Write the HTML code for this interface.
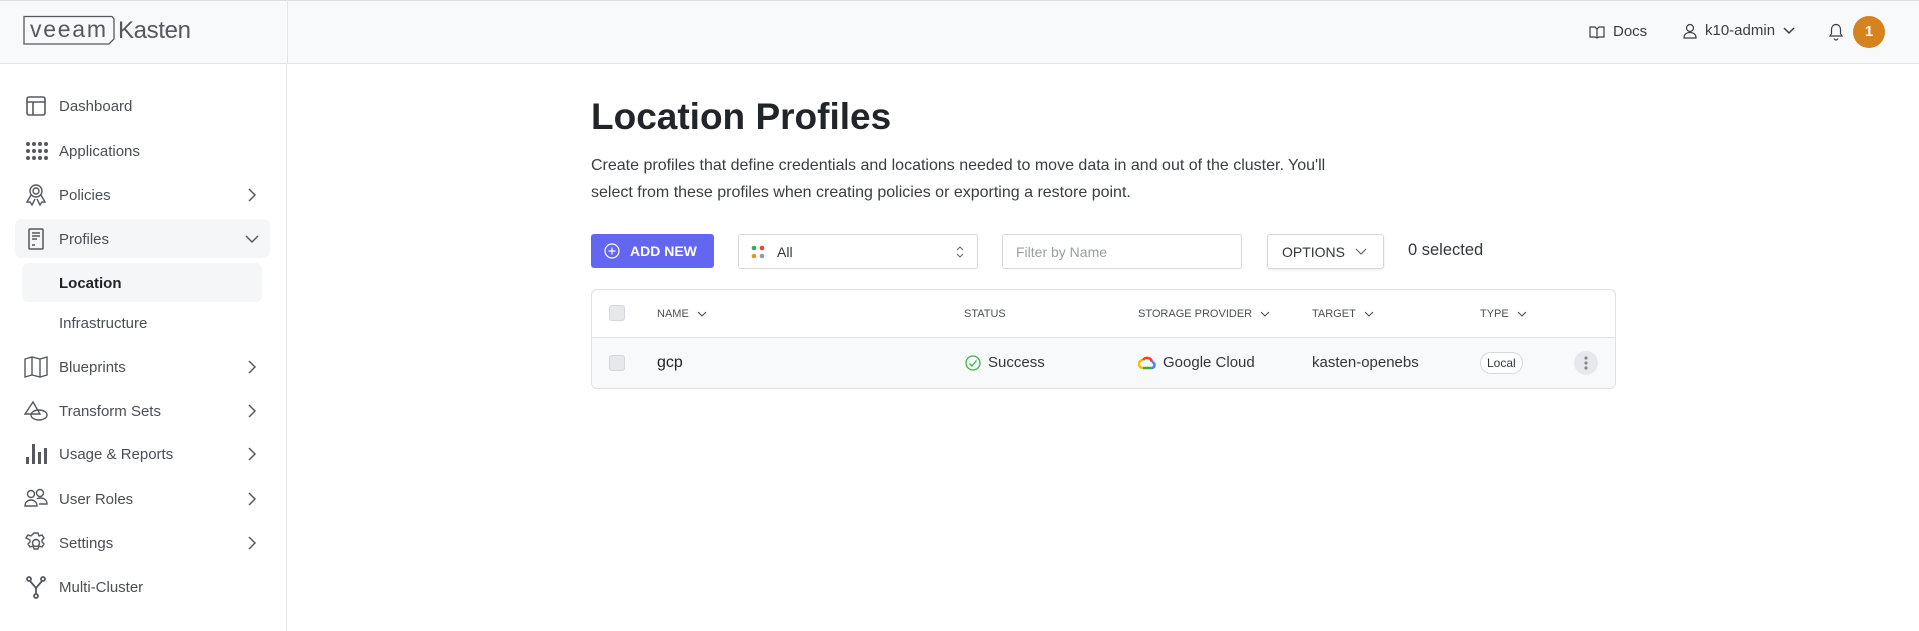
<!DOCTYPE html>
<html><head><meta charset="utf-8"><style>
*{box-sizing:border-box;margin:0;padding:0}
body{width:1919px;height:631px;overflow:hidden;background:#fff;font-family:"Liberation Sans",sans-serif;color:#33363b;position:relative}
.hdr{position:absolute;left:0;top:0;width:1919px;height:64px;background:#f8f9fa;border-top:1px solid #dcdee2;border-bottom:1px solid #e3e5e8}
.side{position:absolute;left:0;top:64px;width:287px;height:567px;border-right:1px solid #e3e5e8}
.logoL{position:absolute;left:287px;top:0;width:1px;height:64px;background:#e3e5e8}
.nav{position:absolute;left:0;width:287px;height:40px;display:flex;align-items:center;font-size:15px;color:#4a4e55}
.nav svg.ic{position:absolute;left:24px;width:24px;height:24px}
.nav span{position:absolute;left:59px}
.nav .chev{position:absolute;left:244px;width:16px;height:16px}
.abs{position:absolute}
.th{position:absolute;top:18px;font-size:11px;color:#4a4e55;display:flex;align-items:center}
.th svg{margin-left:8px}
</style></head><body>
<div class="hdr"></div>
<div class="logoL"></div>
<svg class="abs" style="left:22px;top:15px" width="172" height="30" viewBox="0 0 172 30">
<path d="M2 1.5H90L92 4V24L87 29H2Z" fill="none" stroke="#55595f" stroke-width="1.3"/>
<text x="8" y="22" font-family="Liberation Sans" font-size="23" fill="#55595f" textLength="76">veeam</text>
<text x="96" y="23" font-family="Liberation Sans" font-size="24" fill="#55595f" textLength="73">Kasten</text>
</svg>
<div class="abs" style="left:1589px;top:23px;font-size:15px;color:#3a3d42;display:flex;align-items:center">
<svg width="16" height="14" viewBox="0 0 16 14" style="margin-right:8px"><path d="M1 2h5l2 2 2-2h5v10h-5l-2 1-2-1H1z M8 4v9" fill="none" stroke="#3a3d42" stroke-width="1.2"/></svg>Docs</div>
<div class="abs" style="left:1682px;top:22px;font-size:15px;color:#3a3d42;display:flex;align-items:center">
<svg width="16" height="16" viewBox="0 0 16 16" style="margin-right:7px"><circle cx="8" cy="5" r="3.5" fill="none" stroke="#3a3d42" stroke-width="1.2"/><path d="M2 15c0-4 3-5.5 6-5.5s6 1.5 6 5.5z" fill="none" stroke="#3a3d42" stroke-width="1.2"/></svg>k10-admin
<svg width="12" height="8" viewBox="0 0 12 8" style="margin-left:8px"><path d="M1 1l5 5 5-5" fill="none" stroke="#3a3d42" stroke-width="1.5"/></svg></div>
<svg class="abs" style="left:1828px;top:23px" width="16" height="18" viewBox="0 0 16 18"><path d="M8 1.5c-3 0-4.5 2.5-4.5 5v4L2 13h12l-1.5-2.5v-4c0-2.5-1.5-5-4.5-5zM6 15.5c.5 1 1.2 1.5 2 1.5s1.5-.5 2-1.5" fill="none" stroke="#3a3d42" stroke-width="1.2"/></svg>
<div class="abs" style="left:1853px;top:16px;width:32px;height:32px;border-radius:50%;background:#d6821e;color:#fff;font-weight:bold;font-size:15px;text-align:center;line-height:32px">1</div>

<div class="side"></div>
<div class="abs" style="left:15px;top:219px;width:255px;height:39px;background:#f5f6f8;border-radius:6px"></div>
<div class="abs" style="left:22px;top:263px;width:240px;height:39px;background:#f5f6f8;border-radius:6px"></div>

<div class="nav" style="top:86px"><svg class="ic" viewBox="0 0 24 24"><rect x="3" y="3" width="18" height="18" rx="2" fill="none" stroke="#55595f" stroke-width="1.6"/><path d="M3 8h18M9 8v13" stroke="#55595f" stroke-width="1.6"/></svg><span>Dashboard</span></div>
<div class="nav" style="top:131px"><svg class="ic" viewBox="0 0 24 24" fill="#55595f"><circle cx="4" cy="5" r="2"/><circle cx="10" cy="5" r="2"/><circle cx="16" cy="5" r="2"/><circle cx="22" cy="5" r="2"/><circle cx="4" cy="12" r="2"/><circle cx="10" cy="12" r="2"/><circle cx="16" cy="12" r="2"/><circle cx="22" cy="12" r="2"/><circle cx="4" cy="19" r="2"/><circle cx="10" cy="19" r="2"/><circle cx="16" cy="19" r="2"/><circle cx="22" cy="19" r="2"/></svg><span>Applications</span></div>
<div class="nav" style="top:175px"><svg class="ic" viewBox="0 0 24 24" fill="none" stroke="#55595f" stroke-width="1.4"><circle cx="12" cy="8" r="6"/><circle cx="12" cy="8" r="3"/><path d="M7 12l-4 7 3 0 2 3 3-6M17 12l4 7-3 0-2 3-3-6"/></svg><span>Policies</span><svg class="chev" viewBox="0 0 16 16"><path d="M5 2l6 6-6 6" fill="none" stroke="#55595f" stroke-width="1.5"/></svg></div>
<div class="nav" style="top:219px"><svg class="ic" viewBox="0 0 24 24" fill="none" stroke="#55595f" stroke-width="1.5"><rect x="5" y="2" width="14" height="20" rx="1"/><path d="M8 6h8M8 9h8M8 12h5M8 18h3"/></svg><span>Profiles</span><svg class="chev" viewBox="0 0 16 16"><path d="M2 5l6 6 6-6" fill="none" stroke="#55595f" stroke-width="1.5"/></svg></div>
<div class="nav" style="top:263px;font-weight:bold;color:#1f2226"><span>Location</span></div>
<div class="nav" style="top:303px"><span>Infrastructure</span></div>
<div class="nav" style="top:347px"><svg class="ic" viewBox="0 0 24 24" fill="none" stroke="#55595f" stroke-width="1.4"><path d="M1 4l7-2 8 2 7-2v18l-7 2-8-2-7 2zM8 2v18M16 4v18"/></svg><span>Blueprints</span><svg class="chev" viewBox="0 0 16 16"><path d="M5 2l6 6-6 6" fill="none" stroke="#55595f" stroke-width="1.5"/></svg></div>
<div class="nav" style="top:391px"><svg class="ic" viewBox="0 0 24 24" fill="none" stroke="#55595f" stroke-width="1.4"><path d="M9 3L1 15h15z"/><ellipse cx="15" cy="16" rx="8" ry="5"/></svg><span>Transform Sets</span><svg class="chev" viewBox="0 0 16 16"><path d="M5 2l6 6-6 6" fill="none" stroke="#55595f" stroke-width="1.5"/></svg></div>
<div class="nav" style="top:434px"><svg class="ic" viewBox="0 0 24 24" fill="#55595f"><rect x="2" y="15" width="3" height="7"/><rect x="8" y="2" width="3" height="20"/><rect x="14" y="10" width="3" height="12"/><rect x="20" y="6" width="3" height="16"/></svg><span>Usage &amp; Reports</span><svg class="chev" viewBox="0 0 16 16"><path d="M5 2l6 6-6 6" fill="none" stroke="#55595f" stroke-width="1.5"/></svg></div>
<div class="nav" style="top:479px"><svg class="ic" viewBox="0 0 24 24" fill="none" stroke="#55595f" stroke-width="1.4"><circle cx="7" cy="7" r="3.5"/><circle cx="16" cy="6" r="3.5"/><path d="M1 19c0-4 3-6 6-6s6 2 6 6zM13 12c1-1 2-1 3-1 4 0 7 2 7 6h-8"/></svg><span>User Roles</span><svg class="chev" viewBox="0 0 16 16"><path d="M5 2l6 6-6 6" fill="none" stroke="#55595f" stroke-width="1.5"/></svg></div>
<div class="nav" style="top:523px"><svg class="ic" viewBox="0 0 24 24" fill="none" stroke="#55595f" stroke-width="1.4"><circle cx="12" cy="12" r="3.5"/><path d="M10 2h4l1 3 3-1 2 3-2 2 0 2 2 2-2 3-3-1-1 3h-4l-1-3-3 1-2-3 2-2v-2L2 7l2-3 3 1z"/></svg><span>Settings</span><svg class="chev" viewBox="0 0 16 16"><path d="M5 2l6 6-6 6" fill="none" stroke="#55595f" stroke-width="1.5"/></svg></div>
<div class="nav" style="top:567px"><svg class="ic" viewBox="0 0 24 24" fill="none" stroke="#55595f" stroke-width="1.8"><circle cx="5" cy="4" r="2"/><circle cx="19" cy="4" r="2"/><circle cx="12" cy="21" r="2"/><path d="M6 6l6 7 6-7M12 13v6"/></svg><span>Multi-Cluster</span></div>

<div class="abs" style="left:591px;top:96px;font-size:37px;font-weight:bold;color:#212428">Location Profiles</div>
<div class="abs" style="left:591px;top:152px;width:800px;font-size:16px;line-height:27px;color:#3a3d42">Create profiles that define credentials and locations needed to move data in and out of the cluster. You'll<br>select from these profiles when creating policies or exporting a restore point.</div>

<div class="abs" style="left:591px;top:234px;width:123px;height:34px;background:#6366f1;border-radius:3px;color:#fff;font-weight:bold;font-size:14px;display:flex;align-items:center;padding-left:13px">
<svg width="16" height="16" viewBox="0 0 16 16" style="margin-right:10px"><circle cx="8" cy="8" r="7" fill="none" stroke="#fff" stroke-width="1.2"/><path d="M8 4.5v7M4.5 8h7" stroke="#fff" stroke-width="1.2"/></svg>ADD NEW</div>
<div class="abs" style="left:738px;top:234px;width:240px;height:35px;border:1px solid #d6d8dc;border-radius:3px;font-size:14px;display:flex;align-items:center;padding-left:12px">
<svg width="14" height="14" viewBox="0 0 14 14" style="margin-right:12px"><circle cx="3" cy="3" r="2.3" fill="#34a853"/><circle cx="11" cy="3" r="2.3" fill="#ea4335"/><circle cx="3" cy="11" r="2.3" fill="#e8912d"/><circle cx="11" cy="11" r="2.3" fill="#999"/></svg>All
<svg width="10" height="14" viewBox="0 0 10 14" style="position:absolute;right:12px"><path d="M2 5l3-3 3 3M2 9l3 3 3-3" fill="none" stroke="#666" stroke-width="1"/></svg></div>
<div class="abs" style="left:1002px;top:234px;width:240px;height:35px;border:1px solid #d6d8dc;border-radius:3px;font-size:14px;color:#9a9da2;display:flex;align-items:center;padding-left:13px">Filter by Name</div>
<div class="abs" style="left:1267px;top:234px;width:117px;height:35px;border:1px solid #d6d8dc;border-radius:3px;font-size:14px;color:#33363b;display:flex;align-items:center;padding-left:14px;box-shadow:0 1px 2px rgba(0,0,0,.08)">OPTIONS
<svg width="12" height="8" viewBox="0 0 12 8" style="margin-left:10px"><path d="M1 1l5 5 5-5" fill="none" stroke="#666" stroke-width="1.2"/></svg></div>
<div class="abs" style="left:1408px;top:241px;font-size:16.5px;color:#33363b">0 selected</div>

<div class="abs" style="left:591px;top:289px;width:1025px;height:100px;border:1px solid #dfe1e4;border-radius:6px;overflow:hidden">
<div class="abs" style="left:0;top:47px;width:1025px;height:53px;background:#f8f9fa;border-top:1px solid #dfe1e4"></div>
<div class="abs" style="left:17px;top:15px;width:16px;height:16px;border-radius:3px;background:#e6e8eb;border:1px solid #d3d6da"></div>
<div class="abs" style="left:17px;top:65px;width:16px;height:16px;border-radius:3px;background:#e6e8eb;border:1px solid #d3d6da"></div>
<div class="th" style="left:65px">NAME<svg width="10" height="6" viewBox="0 0 10 6"><path d="M1 1l4 4 4-4" fill="none" stroke="#4a4e55" stroke-width="1.1"/></svg></div>
<div class="th" style="left:372px">STATUS</div>
<div class="th" style="left:546px">STORAGE PROVIDER<svg width="10" height="6" viewBox="0 0 10 6"><path d="M1 1l4 4 4-4" fill="none" stroke="#4a4e55" stroke-width="1.1"/></svg></div>
<div class="th" style="left:720px">TARGET<svg width="10" height="6" viewBox="0 0 10 6"><path d="M1 1l4 4 4-4" fill="none" stroke="#4a4e55" stroke-width="1.1"/></svg></div>
<div class="th" style="left:888px">TYPE<svg width="10" height="6" viewBox="0 0 10 6"><path d="M1 1l4 4 4-4" fill="none" stroke="#4a4e55" stroke-width="1.1"/></svg></div>
<div class="abs" style="left:65px;top:64px;font-size:16px;color:#212428">gcp</div>
<div class="abs" style="left:373px;top:64px;font-size:15px;display:flex;align-items:center"><svg width="16" height="16" viewBox="0 0 16 16" style="margin-right:7px"><circle cx="8" cy="8" r="7" fill="none" stroke="#3bb54a" stroke-width="1.3"/><path d="M4.5 8.5l2.5 2.5 4.5-5.5" fill="none" stroke="#3bb54a" stroke-width="1.3"/></svg>Success</div>
<div class="abs" style="left:546px;top:64px;font-size:15px;display:flex;align-items:center"><svg width="18" height="16" viewBox="0 0 18 16" style="margin-right:7px"><path d="M5 13a4 4 0 0 1 0-8" fill="none" stroke="#fbbc04" stroke-width="2.5"/><path d="M5 5a5 5 0 0 1 9 2" fill="none" stroke="#ea4335" stroke-width="2.5"/><path d="M14 7a3 3 0 0 1-1 6" fill="none" stroke="#4285f4" stroke-width="2.5"/><path d="M13 13H5" stroke="#34a853" stroke-width="2.5"/></svg>Google Cloud</div>
<div class="abs" style="left:720px;top:64px;font-size:15px">kasten-openebs</div>
<div class="abs" style="left:888px;top:62px;height:22px;padding:0 6px;border:1px solid #d6d8dc;border-radius:11px;background:#fff;font-size:12px;line-height:20px">Local</div>
<div class="abs" style="left:982px;top:61px;width:24px;height:24px;border-radius:50%;background:#e6e8eb"><svg width="24" height="24" viewBox="0 0 24 24"><circle cx="12" cy="7" r="1.6" fill="#888"/><circle cx="12" cy="12" r="1.6" fill="#888"/><circle cx="12" cy="17" r="1.6" fill="#888"/></svg></div>
</div>
</body></html>
